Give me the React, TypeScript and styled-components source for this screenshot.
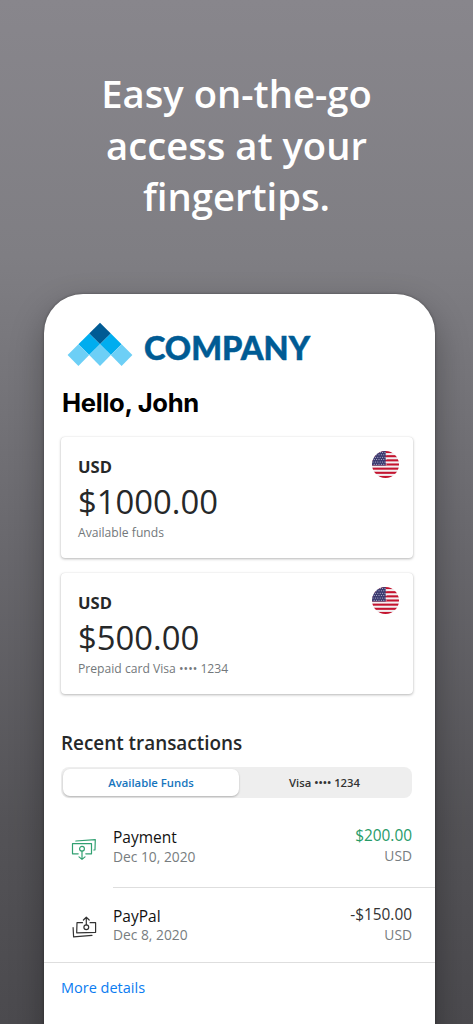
import React from "react";
import styled, { createGlobalStyle } from "styled-components";

const Global = createGlobalStyle`
  * { box-sizing: border-box; }
  body { margin: 0; font-family: "Open Sans", sans-serif; color: #262829; }
  h1, h2, p { margin: 0; }
`;

const Page = styled.main`
  height: 1024px;
  overflow: hidden;
  padding: 68px 38px 0 44px;
  background: linear-gradient(180deg, #88868c 0%, #7f7e83 25%, #6a696e 52%, #545357 80%, #4b4a4e 100%);
`;

const Headline = styled.h1`
  height: 226px;
  margin: 0 -38px 0 -44px;
  color: #fff;
  font-size: 38.2px;
  font-weight: 600;
  line-height: 51.5px;
  text-align: center;
`;

const Phone = styled.section`
  height: 780px;
  padding: 28px 0 0 17px;
  border-radius: 39px 39px 0 0;
  background: #fff;
  box-shadow: 0 0 3px rgba(0, 0, 0, 0.35), 0 14px 34px rgba(0, 0, 0, 0.3);
`;

const Logo = styled.svg`
  display: block;
  width: 260px;
  height: 46px;
`;

const Greeting = styled.h2`
  height: 68px;
  padding: 17px 0 0 1px;
  font-family: Inter, sans-serif;
  font-size: 25.6px;
  font-weight: 700;
  line-height: 36px;
  letter-spacing: -0.3px;
  color: #000;
`;

const Cards = styled.div`
  display: grid;
  gap: 15px;
  width: 352px;
  padding-top: 1px;
`;

const Card = styled.article`
  display: flex;
  justify-content: space-between;
  height: 121px;
  padding: 14px 14px 0 17px;
  border-radius: 4px;
  background: #fff;
  box-shadow: 0 1px 3px rgba(0, 0, 0, 0.28), 0 0 1px rgba(0, 0, 0, 0.12);
`;

const Currency = styled.p`
  font-size: 16.6px;
  font-weight: 700;
  line-height: 32px;
`;

const Balance = styled.p`
  font-size: 32.8px;
  line-height: 38px;
`;

const CardNote = styled.p`
  padding-top: 1px;
  font-size: 12.15px;
  line-height: 22px;
  color: #73787b;
`;

const Flag = styled.svg`
  flex: none;
  width: 27px;
  height: 27px;
`;

const SectionTitle = styled.h2`
  margin-top: 34px;
  font-size: 18.9px;
  font-weight: 600;
  line-height: 30px;
`;

const Tabs = styled.div`
  display: flex;
  width: 351px;
  height: 31px;
  margin-top: 9px;
  padding: 2px;
  border-radius: 8px;
  background: #eee;
`;

const Tab = styled.button<{ $active?: boolean }>`
  flex: ${(p) => (p.$active ? "0 0 176px" : "1")};
  padding: 0 0 1px;
  border: 0;
  border-radius: 7px;
  background: ${(p) => (p.$active ? "#fff" : "transparent")};
  box-shadow: ${(p) => (p.$active ? "0 1px 2px rgba(0, 0, 0, 0.25)" : "none")};
  color: ${(p) => (p.$active ? "#1675bd" : "#333")};
  font: 600 11.3px/25px "Open Sans", sans-serif;
`;

const Row = styled.div<{ $height: number; $last?: boolean }>`
  display: flex;
  height: ${(p) => p.$height}px;
  margin-left: ${(p) => (p.$last ? "-17px" : "0")};
  padding-left: ${(p) => (p.$last ? "17px" : "0")};
  border-bottom: ${(p) => (p.$last ? "1px solid #dedede" : "none")};
`;

const IconCell = styled.div<{ $top: number }>`
  width: 52px;
  padding: ${(p) => p.$top}px 0 0 9px;
`;

const RowBody = styled.div<{ $line?: boolean }>`
  display: flex;
  flex: 1;
  justify-content: space-between;
  padding: ${(p) => (p.$line ? 30 : 20)}px 23px 0 0;
  border-bottom: ${(p) => (p.$line ? "1px solid #dedede" : "none")};
`;

const Amounts = styled.div<{ $lift: number }>`
  margin-top: -${(p) => p.$lift}px;
  text-align: right;
`;

const Name = styled.p<{ $line: number }>`
  font-size: 15.5px;
  line-height: ${(p) => p.$line}px;
  color: #111;
`;

const Amount = styled.p<{ $color: string }>`
  font-size: 15.4px;
  line-height: 20px;
  color: ${(p) => p.$color};
`;

const Sub = styled.p`
  font-size: 13.8px;
  line-height: 20px;
  color: #777d80;
`;

const More = styled.a`
  display: block;
  padding-top: 14px;
  font-size: 14.5px;
  line-height: 22px;
  color: #0b7cf1;
`;

const TILES = [
  [32.5, 11, "#005b94"],
  [21.7, 21.8, "#00adef"],
  [43.3, 21.8, "#00adef"],
  [10.9, 32.6, "#6dcff6"],
  [32.5, 32.6, "#6dcff6"],
  [54.1, 32.6, "#6dcff6"],
] as const;

const CompanyLogo = () => (
  <Logo viewBox="0 0 260 46">
    {TILES.map(([x, y, fill]) => (
      <path key={`${x}-${y}`} transform={`translate(${x + 6.5} ${y + 0.5})`} d="M0-10.8 10.8 0 0 10.8-10.8 0Z" fill={fill} />
    ))}
    <text x="83" y="38.2" fill="#005b94" stroke="#005b94" strokeWidth="0.5" fontFamily="Lato, sans-serif" fontWeight="900" fontSize="32.5" textLength="166" lengthAdjust="spacingAndGlyphs">
      COMPANY
    </text>
  </Logo>
);

const UsFlag = ({ id }: { id: string }) => (
  <Flag viewBox="0 0 27 27">
    <clipPath id={id}>
      <circle cx="13.5" cy="13.5" r="13.5" />
    </clipPath>
    <g clipPath={`url(#${id})`}>
      <rect width="27" height="27" fill="#f3f1f3" />
      {[0, 1, 2, 3, 4, 5, 6].map((i) => (
        <rect key={i} y={i * 4.154} width="27" height="2.077" fill="#c4142f" />
      ))}
      <rect width="13.7" height="14.54" fill="#3c3b70" />
      {[0, 1, 2, 3, 4, 5].map((r) =>
        [0, 1, 2, 3, 4, 5].map((c) => (
          <circle key={`${r}-${c}`} cx={1 + c * 2.4 + (r % 2) * 1.2} cy={1.5 + r * 2.35} r="0.5" fill="#d5d4e4" />
        ))
      )}
    </g>
  </Flag>
);

const MoneyIn = () => (
  <svg width="28" height="24" viewBox="0 0 28 24" fill="none" stroke="#30a071" strokeWidth="1.2" strokeLinecap="round" strokeLinejoin="round">
    <path d="M8.2 15.8H2.5V5.7H21.5V15.8H15.8" />
    <path d="M5.8 3 25.3 1.6 25 11.8 23.8 12" />
    <circle cx="12" cy="10.8" r="2.4" />
    <path d="M12 13.2V21.2M9 18.9 12 21.4 15 18.9" />
  </svg>
);

const MoneyOut = () => (
  <svg width="28" height="24" viewBox="0 0 28 24" fill="none" stroke="#333" strokeWidth="1.2" strokeLinecap="round" strokeLinejoin="round">
    <path d="M12.5 6.7H7L6.7 16.8 25.6 16.3V6.7H20.1" />
    <path d="M3.1 11.5 3.6 20.9 22 19.4" />
    <circle cx="16.3" cy="11.2" r="2.4" />
    <path d="M16.3 8.8V1.4M13.4 4 16.3 1.2 19.2 4" />
  </svg>
);

export default function App() {
  return (
    <Page>
      <Global />
      <Headline>
        Easy on-the-go
        <br />
        access at your
        <br />
        fingertips.
      </Headline>
      <Phone>
        <CompanyLogo />
        <Greeting>Hello, John</Greeting>
        <Cards>
          <Card>
            <div>
              <Currency>USD</Currency>
              <Balance>$1000.00</Balance>
              <CardNote>Available funds</CardNote>
            </div>
            <UsFlag id="flag-funds" />
          </Card>
          <Card>
            <div>
              <Currency>USD</Currency>
              <Balance>$500.00</Balance>
              <CardNote>Prepaid card Visa •••• 1234</CardNote>
            </div>
            <UsFlag id="flag-card" />
          </Card>
        </Cards>
        <SectionTitle>Recent transactions</SectionTitle>
        <Tabs>
          <Tab $active>Available Funds</Tab>
          <Tab>Visa •••• 1234</Tab>
        </Tabs>
        <Row $height={90}>
          <IconCell $top={40}>
            <MoneyIn />
          </IconCell>
          <RowBody $line>
            <div>
              <Name $line={19}>Payment</Name>
              <Sub>Dec 10, 2020</Sub>
            </div>
            <Amounts $lift={2}>
              <Amount $color="#279b68">$200.00</Amount>
              <Sub>USD</Sub>
            </Amounts>
          </RowBody>
        </Row>
        <Row $height={75} $last>
          <IconCell $top={28}>
            <MoneyOut />
          </IconCell>
          <RowBody>
            <div>
              <Name $line={17}>PayPal</Name>
              <Sub>Dec 8, 2020</Sub>
            </div>
            <Amounts $lift={3}>
              <Amount $color="#333">-$150.00</Amount>
              <Sub>USD</Sub>
            </Amounts>
          </RowBody>
        </Row>
        <More>More details</More>
      </Phone>
    </Page>
  );
}
